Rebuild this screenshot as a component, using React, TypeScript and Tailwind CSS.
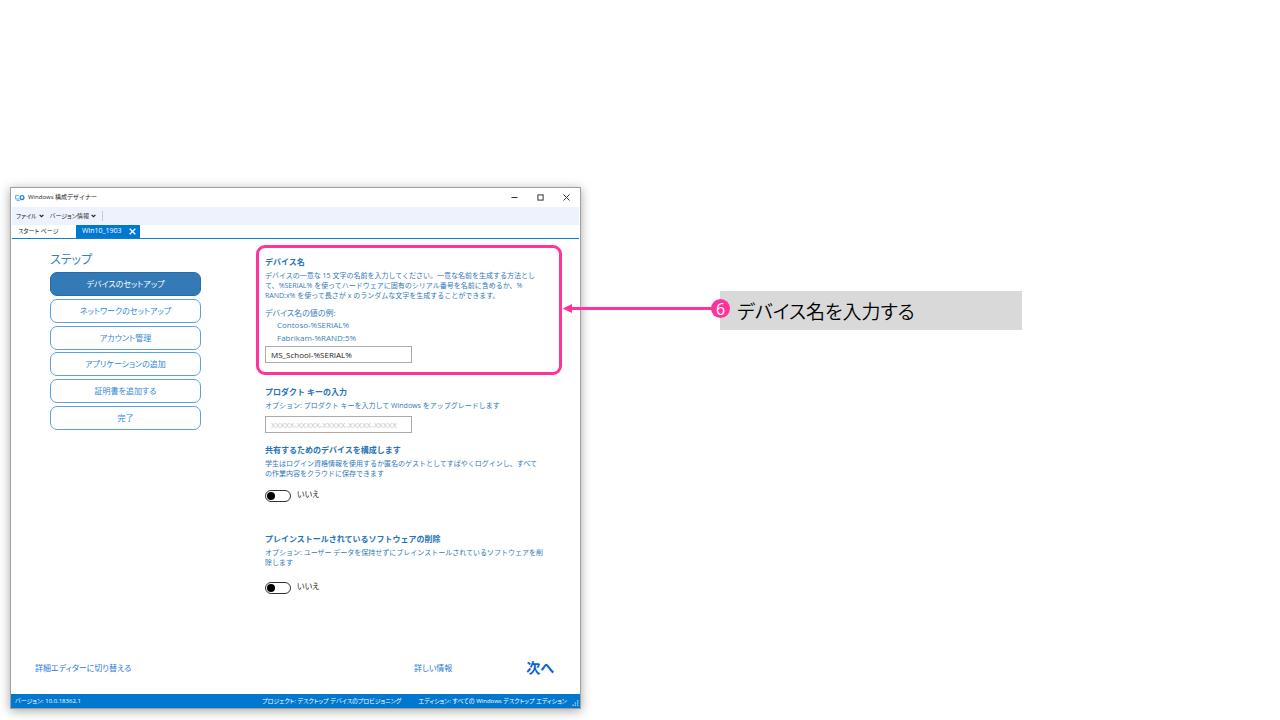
import { useState } from "react";
import type { ReactNode } from "react";

const steps = [
  "デバイスのセットアップ",
  "ネットワークのセットアップ",
  "アカウント管理",
  "アプリケーションの追加",
  "証明書を追加する",
  "完了",
];

function Caret() {
  return (
    <svg width="5" height="4" viewBox="0 0 5 4" aria-hidden="true">
      <path d="M0.6 0.8 L2.5 2.7 L4.4 0.8" fill="none" stroke="#222" strokeWidth="1.2" />
    </svg>
  );
}

function TitleBar() {
  return (
    <header className="flex h-[19px] items-center pl-1">
      <svg width="10" height="8" viewBox="0 0 10 8" aria-hidden="true" fill="none">
        <path d="M4 5 H0.6 V1.4 H4 M1.5 6.4 H5" stroke="#5fb0e6" strokeWidth="1" />
        <circle cx="7" cy="3.6" r="1.9" stroke="#1a86d6" strokeWidth="1.3" />
      </svg>
      <h1 className="ml-[3px] grow text-[6px] text-[#222] [font-feature-settings:normal]">
        Windows 構成デザイナー
      </h1>
      <div className="flex pr-[1px]">
        <button aria-label="最小化" className="grid h-4 w-[26px] place-items-center">
          <svg width="7" height="7" viewBox="0 0 7 7">
            <path d="M0.5 3.5 H6.5" stroke="#333" />
          </svg>
        </button>
        <button aria-label="最大化" className="grid h-4 w-[26px] place-items-center">
          <svg width="7" height="7" viewBox="0 0 7 7">
            <rect x="0.9" y="0.9" width="5.2" height="5.2" fill="none" stroke="#333" />
          </svg>
        </button>
        <button aria-label="閉じる" className="grid h-4 w-[26px] place-items-center">
          <svg width="7" height="7" viewBox="0 0 7 7">
            <path d="M0.5 0.5 L6.5 6.5 M6.5 0.5 L0.5 6.5" stroke="#333" />
          </svg>
        </button>
      </div>
    </header>
  );
}

function Section({ title, children }: { title: string; children: ReactNode }) {
  return (
    <section className="pl-[9px]">
      <h3 className="text-[8px] leading-[14px] font-bold text-[#2673b8] [font-feature-settings:normal]">
        {title}
      </h3>
      {children}
    </section>
  );
}

function Description({ children }: { children: ReactNode }) {
  return (
    <p className="text-[7px] leading-[10px] whitespace-nowrap text-[#2f79ba] [font-feature-settings:normal]">
      {children}
    </p>
  );
}

function Toggle({ label }: { label: string }) {
  const [on, setOn] = useState(false);
  return (
    <label className="flex items-start gap-[6px] text-[8px] leading-[8px] text-[#222]">
      <input
        type="checkbox"
        role="switch"
        aria-label={label}
        checked={on}
        onChange={() => setOn(!on)}
        className="flex h-3 w-[26px] appearance-none items-center rounded-full border border-[#333] bg-white px-[1px] before:size-2 before:rounded-full before:bg-black checked:justify-end"
      />
      <span>{on ? "はい" : "いいえ"}</span>
    </label>
  );
}

const field =
  "block h-[17px] w-[147px] border border-[#ababab] bg-white px-[5px] text-[8px] text-[#222] placeholder:text-[#c4c4c4]";

export default function App() {
  const [active, setActive] = useState(0);
  return (
    <main
      lang="ja"
      className="flex min-h-screen items-start bg-white pt-[187px] pb-2 pl-[10px] font-['Open_Sans','Noto_Sans_CJK_JP',sans-serif] [font-feature-settings:'palt']"
    >
      <div className="flex w-[571px] shrink-0 flex-col border border-[#a0a0a0] bg-white shadow-[0_2px_10px_rgba(0,0,0,0.35)]">
        <TitleBar />
        <nav className="mx-[1px] flex h-[18px] items-center gap-[6px] bg-[#ecf3fc] pl-[4px] text-[6px] text-[#222]">
          <button className="flex items-center gap-[2px]">
            ファイル <Caret />
          </button>
          <button className="flex items-center gap-[2px]">
            バージョン情報 <Caret />
          </button>
          <span className="h-[10px] w-px bg-[#c3c9d1]" />
        </nav>
        <div className="mx-[1px] flex h-[14px] items-end border-b border-[#0f80d0]">
          <button className="h-[13px] w-[64px] pl-[6px] text-left text-[6px] text-[#222]">
            スタート ページ
          </button>
          <div className="flex h-[13px] w-[64px] items-center justify-between bg-[#0078d0] pr-1 pl-[6px] text-[7px] text-white">
            <button>Win10_1903</button>
            <button aria-label="タブを閉じる">
              <svg width="7" height="7" viewBox="0 0 7 7">
                <path d="M0.7 0.7 L6.3 6.3 M6.3 0.7 L0.7 6.3" stroke="#fff" strokeWidth="1.3" />
              </svg>
            </button>
          </div>
        </div>

        <div className="flex pt-[6px]">
          <aside className="w-[245px] pt-[6px] pl-[39px]">
            <h2 className="text-[12px] leading-[18px] text-[#3a80bd]">ステップ</h2>
            <div className="mt-[3px] flex h-[158px] w-[151px] flex-col justify-between">
              {steps.map((step, i) => (
                <button
                  key={step}
                  onClick={() => setActive(i)}
                  className={
                    i === active
                      ? "h-6 rounded-[7px] border border-[#256cab] bg-[#337ab7] text-[8px] text-white"
                      : "h-6 rounded-[7px] border border-[#5ba0e6] bg-white text-[8px] text-[#2f86dc]"
                  }
                >
                  {step}
                </button>
              ))}
            </div>
          </aside>

          <div className="w-[306px]">
            <div className="h-[130px] rounded-[9px] border-[3px] border-[#ff3399] pt-[7px] [&>section]:pl-[6px]">
              <Section title="デバイス名">
                <div className="mt-[2px]">
                  <Description>
                    デバイスの一意な 15 文字の名前を入力してください。一意な名前を生成する方法とし
                    <br />
                    て、%SERIAL% を使ってハードウェアに固有のシリアル番号を名前に含めるか、%
                    <br />
                    RAND:x% を使って長さが x のランダムな文字を生成することができます。
                  </Description>
                </div>
                <div className="mt-[7px] text-[8px] text-[#3a80bd]">
                  <label htmlFor="device-name" className="block leading-[10px]">
                    デバイス名の値の例:
                  </label>
                  <ul className="pl-3 leading-[13px]">
                    <li>Contoso-%SERIAL%</li>
                    <li>Fabrikam-%RAND:5%</li>
                  </ul>
                </div>
                <input
                  id="device-name"
                  className={field + " mt-[2px]"}
                  defaultValue="MS_School-%SERIAL%"
                />
              </Section>
            </div>

            <div className="mt-[10px]">
              <Section title="プロダクト キーの入力">
                <div className="mt-[2px] mb-[5px]">
                  <Description>
                    オプション: プロダクト キーを入力して Windows をアップグレードします
                  </Description>
                </div>
                <input
                  aria-label="プロダクト キー"
                  className={field}
                  placeholder="XXXXX-XXXXX-XXXXX-XXXXX-XXXXX"
                />
              </Section>
            </div>

            <div className="mt-[10px]">
              <Section title="共有するためのデバイスを構成します">
                <div className="mt-[2px] mb-[11px]">
                  <Description>
                    学生はログイン資格情報を使用するか匿名のゲストとしてすばやくログインし、すべて
                    <br />
                    の作業内容をクラウドに保存できます
                  </Description>
                </div>
                <Toggle label="共有するためのデバイスを構成します" />
              </Section>
            </div>

            <div className="mt-[30px]">
              <Section title="プレインストールされているソフトウェアの削除">
                <div className="mt-[2px] mb-[14px]">
                  <Description>
                    オプション: ユーザー データを保持せずにプレインストールされているソフトウェアを削
                    <br />
                    除します
                  </Description>
                </div>
                <Toggle label="プレインストールされているソフトウェアの削除" />
              </Section>
            </div>
          </div>
        </div>

        <div className="mt-[64px] flex h-5 items-center pr-[26px] pl-6 text-[8px] text-[#1f7bd8]">
          <a href="#editor" className="grow">
            詳細エディターに切り替える
          </a>
          <a href="#details">詳しい情報</a>
          <button className="ml-[74px] text-[14px] leading-5 font-bold text-[#0a63d0]">次へ</button>
        </div>

        <footer className="mt-4 flex h-[14px] items-center bg-[#0078d0] pl-1 text-[6px] text-white">
          <span className="grow">バージョン: 10.0.18362.1</span>
          <span>プロジェクト: デスクトップ デバイスのプロビジョニング</span>
          <span className="ml-[17px]">エディション: すべての Windows デスクトップ エディション</span>
          <svg
            className="ml-[4px] self-end"
            width="9"
            height="9"
            viewBox="0 0 9 9"
            fill="#9cc9ec"
            aria-hidden="true"
          >
            <path d="M6 1h1.4v1.4h-1.4z M6 3.3h1.4v1.4h-1.4z M6 5.6h1.4v1.4h-1.4z M3.7 3.3h1.4v1.4h-1.4z M3.7 5.6h1.4v1.4h-1.4z M1.4 5.6h1.4v1.4h-1.4z" />
          </svg>
        </footer>
      </div>

      <div className="relative mt-[104px] ml-[139px] flex h-[39px] w-[302px] items-center bg-[#d9d9d9] pt-[3px] pl-[17px] text-[19px] font-[350] text-black">
        <svg
          className="absolute top-[12px] -left-[158px]"
          width="150"
          height="11"
          viewBox="0 0 150 11"
          aria-hidden="true"
        >
          <path d="M7 5.5 H150" stroke="#ff3399" strokeWidth="3" />
          <path d="M0.5 5.5 L10 1 V10 Z" fill="#ff3399" />
        </svg>
        <span className="absolute top-2 -left-[9px] grid size-[19px] place-items-center rounded-full bg-[#ff3399] text-[16px] leading-none font-normal text-white">
          6
        </span>
        <p>デバイス名を入力する</p>
      </div>
    </main>
  );
}
